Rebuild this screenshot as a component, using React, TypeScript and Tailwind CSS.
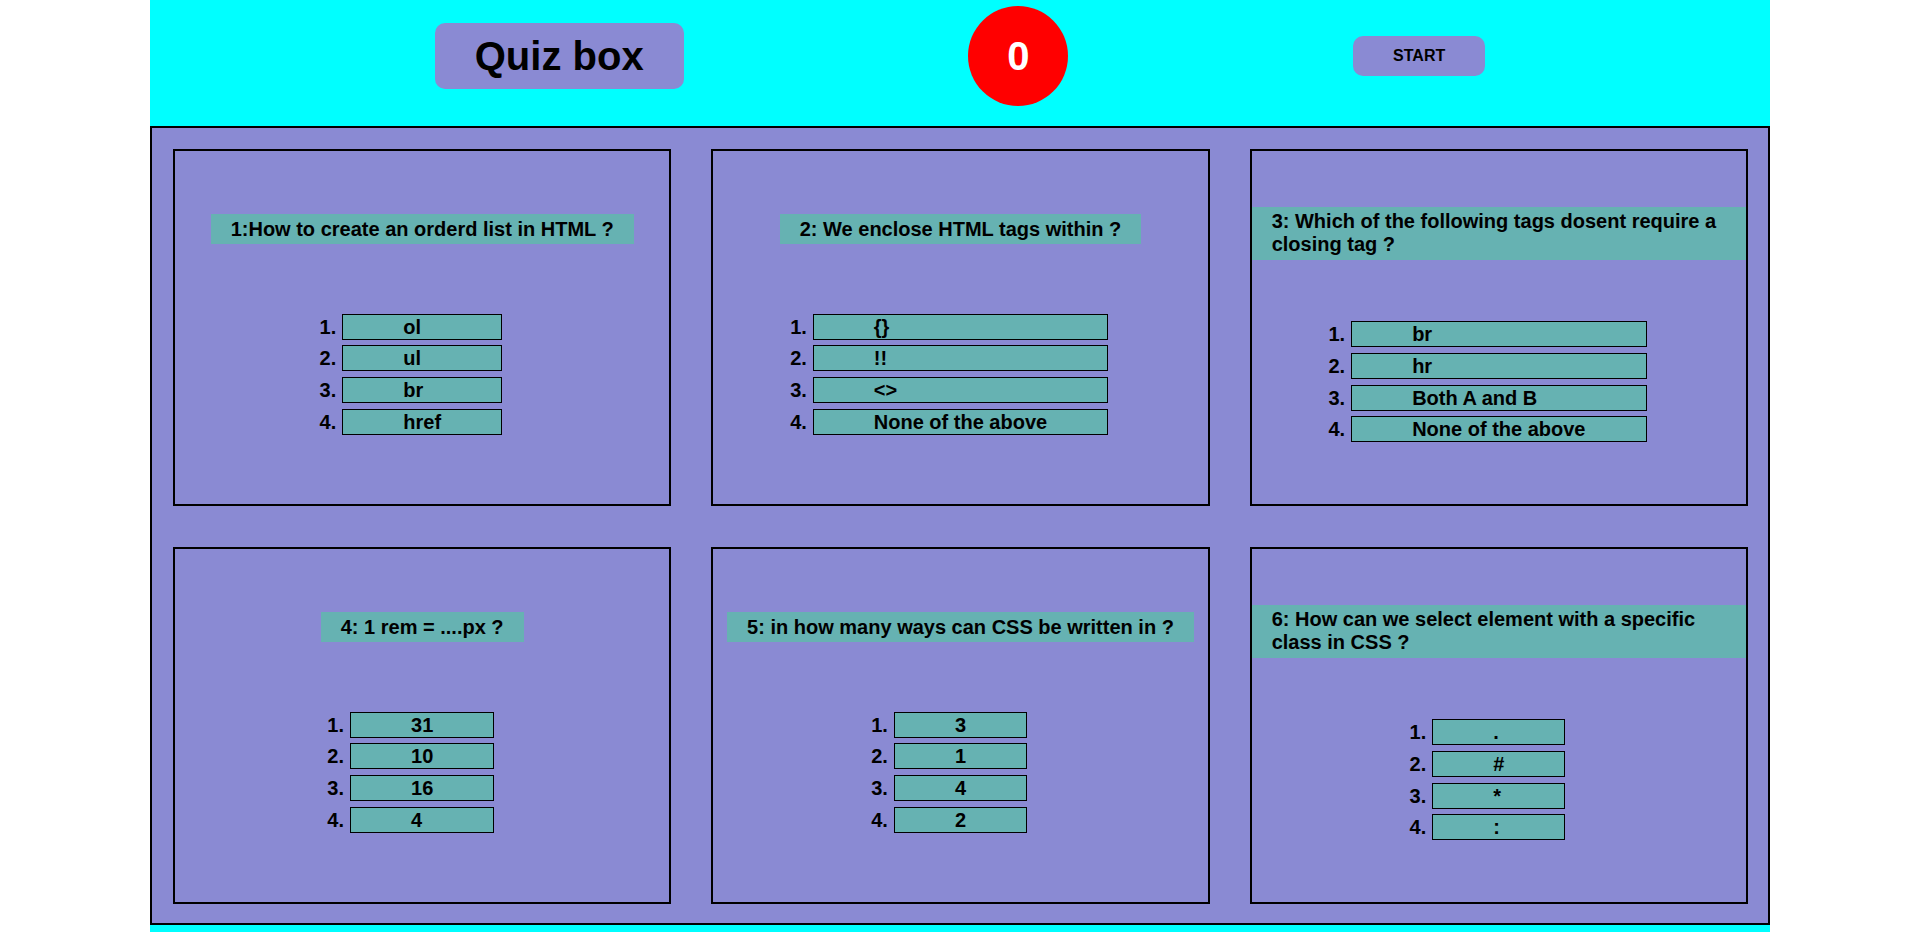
const QUESTIONS = [
  { q: '1:How to create an orderd list in HTML ?', options: ['ol', 'ul', 'br', 'href'] },
  { q: '2: We enclose HTML tags within ?', options: ['{}', '!!', '<>', 'None of the above'] },
  {
    q: '3: Which of the following tags dosent require a closing tag ?',
    options: ['br', 'hr', 'Both A and B', 'None of the above'],
  },
  { q: '4: 1 rem = ....px ?', options: ['31', '10', '16', '4'] },
  { q: '5: in how many ways can CSS be written in ?', options: ['3', '1', '4', '2'] },
  { q: '6: How can we select element with a specific class in CSS ?', options: ['.', '#', '*', ':'] },
]

function QuestionCard({ q, options }: { q: string; options: string[] }) {
  return (
    <div className="flex flex-col justify-evenly border-2 border-black pt-px pb-[7px]">
      <p className="mx-auto w-fit max-w-full bg-[#66b2b2] px-5 py-[3.5px] text-left text-[20px] leading-[23px] font-bold">
        {q}
      </p>
      <ol className="mx-auto mt-[7px] grid w-fit grid-cols-[24px_auto_24px] gap-y-[5.67px]">
        {options.map((opt, i) => (
          <li key={i} className="contents">
            <span className="pr-[6px] text-right text-[20px] leading-[26px] font-bold">{i + 1}.</span>
            <button className="border border-black bg-[#66b2b2] px-[60px] text-left text-[20px] leading-[24px] font-bold whitespace-nowrap">
              {opt}
            </button>
            <span />
          </li>
        ))}
      </ol>
    </div>
  )
}

export default function App() {
  return (
    <div className="min-h-screen bg-white font-['Liberation_Sans',Arial,sans-serif] text-black">
      <div className="mx-auto w-[1620px] bg-[#00ffff] pb-5">
        <header className="flex h-[112px] items-center justify-evenly">
          <h1 className="rounded-[10px] bg-[#8a8ad3] px-10 py-[10px] text-[40px] leading-[46px] font-bold">
            Quiz box
          </h1>
          <div className="flex h-[100px] w-[100px] items-center justify-center rounded-full bg-[#ff0000] text-[40px] font-bold text-white">
            0
          </div>
          <button className="flex h-[40px] items-center rounded-[10px] bg-[#8a8ad3] px-10 text-[16px] font-bold">
            START
          </button>
        </header>
        <main className="mt-[14px] grid h-[799px] grid-cols-3 grid-rows-2 gap-x-10 gap-y-[41px] border-2 border-black bg-[#8a8ad3] pt-[21px] pr-5 pb-[19px] pl-[21px]">
          {QUESTIONS.map((item, i) => (
            <QuestionCard key={i} q={item.q} options={item.options} />
          ))}
        </main>
      </div>
    </div>
  )
}
